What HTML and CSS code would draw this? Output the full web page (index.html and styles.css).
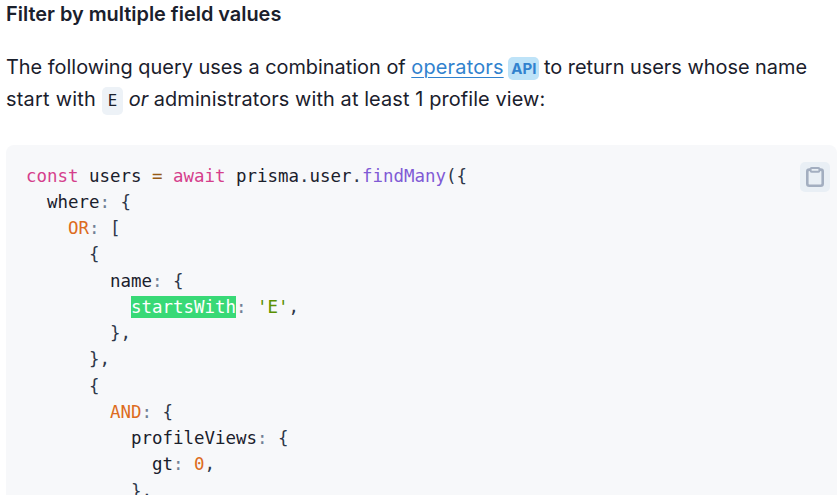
FILE: index.html
```html
<!DOCTYPE html>
<html lang="en">
<head>
<meta charset="utf-8">
<title>Filter by multiple field values</title>
<link rel="stylesheet" href="styles.css">
</head>
<body>
<h4 class="heading">Filter by multiple field values</h4>
<p class="intro">The following query uses a combination of <a class="link" href="#">operators</a> <span class="badge">API</span> to return users whose name <span class="wide">start with</span> <code class="inline">E</code> <em>or</em> <span class="wider">administrators with at least 1 profile view:</span></p>
<div class="block">
<button class="copy" aria-label="Copy"><svg width="18" height="20" viewBox="0 0 18 20" fill="none"><rect x="1.3" y="2.6" width="15.4" height="16.1" rx="2" stroke="#a3aec0" stroke-width="2.6"/><rect x="4.6" y="1" width="8.8" height="3.8" rx="1" fill="#e9eff5" stroke="#a3aec0" stroke-width="2"/></svg></button>
<pre class="code"><span class="kw">const</span> users <span class="op">=</span> <span class="kw">await</span> prisma<span class="pn">.</span>user<span class="pn">.</span><span class="fn">findMany</span><span class="pn">({</span>
  where<span class="cl">:</span> <span class="pn">{</span>
    <span class="num">OR</span><span class="cl">:</span> <span class="pn">[</span>
      <span class="pn">{</span>
        name<span class="cl">:</span> <span class="pn">{</span>
          <span class="mark">startsWith</span><span class="cl">:</span> <span class="str">'E'</span><span class="pn">,</span>
        <span class="pn">},</span>
      <span class="pn">},</span>
      <span class="pn">{</span>
        <span class="num">AND</span><span class="cl">:</span> <span class="pn">{</span>
          profileViews<span class="cl">:</span> <span class="pn">{</span>
            gt<span class="cl">:</span> <span class="num">0</span><span class="pn">,</span>
          <span class="pn">},</span></pre>
</div>
</body>
</html>
```
FILE: styles.css
```css
html, body {
  margin: 0;
  height: 495px;
  overflow: hidden;
  background: #fff;
}
body {
  padding: 0 0 0 6px;
  font-family: Inter, "Noto Sans", sans-serif;
  color: #1a202c;
}
.heading {
  margin: 0;
  font-size: 19.9px;
  line-height: 29px;
  font-weight: 600;
}
.intro {
  margin: 22px 0 0;
  font-size: 19.9px;
  line-height: 32px;
}
.wide { letter-spacing: 0.25px; }
.wider { letter-spacing: 0.11px; }
.link {
  color: #3182ce;
  letter-spacing: 0.2px;
  text-decoration: underline;
  text-underline-offset: 3px;
  text-decoration-thickness: 1px;
}
.badge {
  display: inline-block;
  margin: 0 -1px;
  padding: 0 3px;
  background: #bee3f8;
  color: #3182ce;
  border-radius: 5px;
  font-size: 15px;
  line-height: 23px;
  font-weight: 700;
}
.inline {
  display: inline-block;
  padding: 0 6px;
  background: #edf2f7;
  border-radius: 5px;
  font-family: "DejaVu Sans Mono", monospace;
  font-size: 15.75px;
  line-height: 28px;
}
.block {
  position: relative;
  margin-top: 30px;
  padding: 17.5px 20px;
  background: #f7f8fa;
  border-radius: 8px;
}
.code {
  margin: 0;
  font-family: "DejaVu Sans Mono", monospace;
  font-size: 17.44px;
  line-height: 26.25px;
  color: #1a202c;
}
.copy {
  position: absolute;
  top: 17px;
  right: 7px;
  display: flex;
  align-items: center;
  justify-content: center;
  width: 30px;
  height: 30px;
  padding: 0;
  border: 0;
  border-radius: 5px;
  background: #e9eff5;
}
.kw { color: #d53f8c; }
.op { color: #975a16; }
.pn { color: #2d3748; }
.cl { color: #718096; }
.fn { color: #805ad5; }
.num { color: #dd6b20; }
.str { color: #5a9000; }
.mark { padding: 1px 0; background: #38d976; color: #fff; }
```
